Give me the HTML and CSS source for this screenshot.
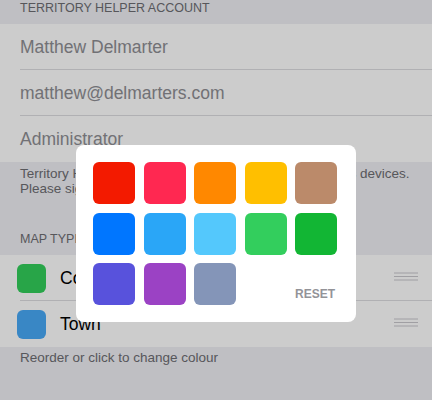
FILE: index.html
```html
<!DOCTYPE html>
<html>
<head>
    <title>Settings</title>
    <link rel="stylesheet" href="styles.css">
</head>
<body>
    <div class="screen">
        <div class="section-header first">TERRITORY HELPER ACCOUNT</div>
        <div class="group">
            <div class="row"><span class="field">Matthew Delmarter</span></div>
            <div class="row"><span class="field">matthew@delmarters.com</span></div>
            <div class="row"><span class="field">Administrator</span></div>
        </div>
        <div class="section-footer">
            <div>Territory Helper account details are synchronised across devices.</div>
            <div>Please sign out and in again to change account.</div>
        </div>

        <div class="section-header second">MAP TYPES</div>
        <div class="group">
            <div class="row map-type">
                <span class="swatch green"></span>
                <span class="label">Country</span>
                <svg class="handle" width="24" height="9" viewBox="0 0 24 9">
                    <path d="M0 1h24M0 4.5h24M0 8h24" stroke="#c8c7cc" stroke-width="1"/>
                </svg>
            </div>
            <div class="row map-type">
                <span class="swatch blue"></span>
                <span class="label">Town</span>
                <svg class="handle" width="24" height="9" viewBox="0 0 24 9">
                    <path d="M0 1h24M0 4.5h24M0 8h24" stroke="#c8c7cc" stroke-width="1"/>
                </svg>
            </div>
        </div>
        <div class="section-footer tight">Reorder or click to change colour</div>
    </div>

    <!-- Colour picker popover -->
    <div class="dim"></div>
    <div class="popover">
        <div class="palette">
            <span class="chip" style="background:#f31a00"></span>
            <span class="chip" style="background:#ff2851"></span>
            <span class="chip" style="background:#ff8800"></span>
            <span class="chip" style="background:#ffbf00"></span>
            <span class="chip" style="background:#bb8a6a"></span>
            <span class="chip" style="background:#0076ff"></span>
            <span class="chip" style="background:#2aa6f7"></span>
            <span class="chip" style="background:#54c8fc"></span>
            <span class="chip" style="background:#33ce5d"></span>
            <span class="chip" style="background:#12b634"></span>
            <span class="chip" style="background:#5852dc"></span>
            <span class="chip" style="background:#9b42c4"></span>
            <span class="chip" style="background:#8495b8"></span>
            <span class="reset">RESET</span>
        </div>
    </div>
</body>
</html>
```

FILE: styles.css
```css
body {
    margin: 0;
    background: #efeff4;
    font-family: "Liberation Sans", Arial, sans-serif;
    color: #000000;
}

.section-header {
    display: flex;
    align-items: flex-end;
    padding: 0 20px 8px;
    font-size: 12.5px;
    line-height: 16px;
    color: #6d6d72;
    box-sizing: border-box;
}

.section-header.first {
    height: 24px;
}

.section-header.second {
    height: 59px;
}

.group {
    background: #ffffff;
}

.row {
    position: relative;
    display: flex;
    align-items: center;
    height: 46px;
    padding-left: 20px;
}

.row::after {
    content: "";
    position: absolute;
    left: 20px;
    right: 0;
    bottom: 0;
    height: 1px;
    background: #dcdce0;
}

.row:last-child::after {
    display: none;
}

.field {
    font-size: 17.5px;
    color: #8e8e93;
}

.section-footer {
    padding: 4px 20px 0;
    font-size: 13.5px;
    line-height: 15px;
    color: #6d6d72;
    white-space: nowrap;
}

.section-footer.tight {
    padding-top: 3px;
}

.map-type {
    padding-left: 17px;
    padding-right: 14px;
}

.swatch {
    width: 29px;
    height: 29px;
    border-radius: 6px;
    flex-shrink: 0;
}

.swatch.green {
    background: #33cf5b;
}

.swatch.blue {
    background: #48a9f7;
}

.label {
    flex: 1;
    margin-left: 14px;
    font-size: 17.5px;
}

.handle {
    margin-top: -3px;
}

.dim {
    position: fixed;
    inset: 0;
    background: rgba(0, 0, 0, 0.2);
}

.popover {
    position: absolute;
    left: 76px;
    top: 145px;
    width: 280px;
    height: 177px;
    box-sizing: border-box;
    padding: 17px 0 0 17px;
    background: #ffffff;
    border-radius: 8px;
}

.palette {
    display: grid;
    grid-template-columns: repeat(5, 42px);
    grid-auto-rows: 42px;
    gap: 8.5px;
}

.chip {
    border-radius: 6px;
}

.reset {
    grid-column: 4 / span 2;
    justify-self: end;
    align-self: end;
    margin: 0 2px 5px 0;
    font-size: 12px;
    line-height: 12px;
    font-weight: bold;
    color: #939398;
}
```
